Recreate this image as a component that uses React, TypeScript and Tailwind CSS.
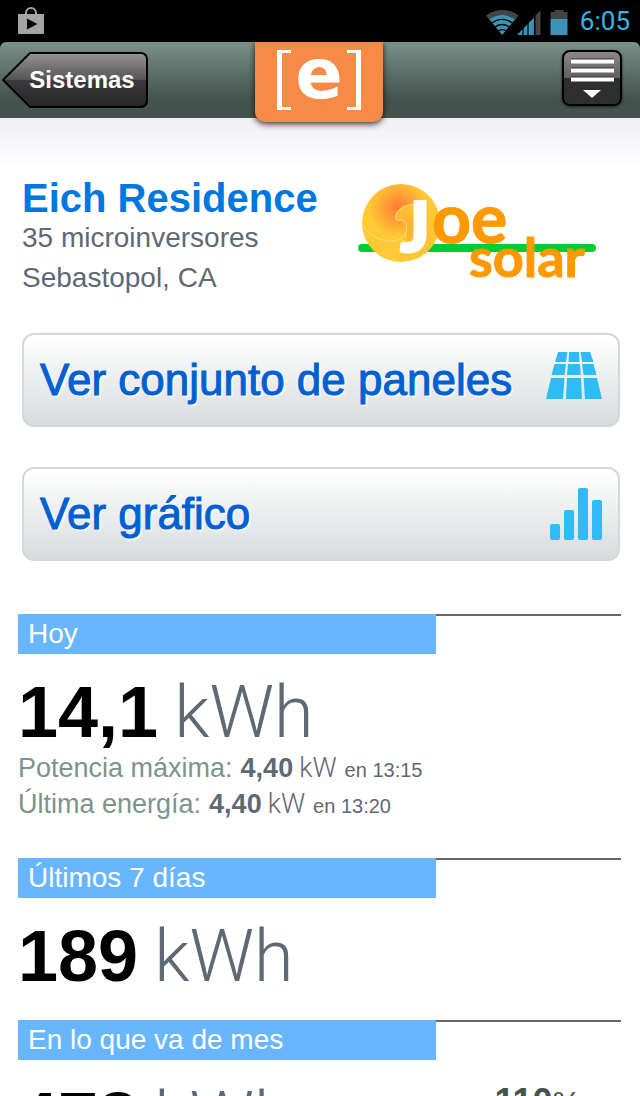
import React from 'react';

type Detail = { label: string; value: string; time: string };

type Period = {
    title: string;
    energy: string;
    percent?: string;
    details?: Detail[];
};

const periods: Period[] = [
    {
        title: 'Hoy',
        energy: '14,1',
        details: [
            { label: 'Potencia máxima:', value: '4,40', time: 'en 13:15' },
            { label: 'Última energía:', value: '4,40', time: 'en 13:20' },
        ],
    },
    { title: 'Últimos 7 días', energy: '189' },
    { title: 'En lo que va de mes', energy: '478', percent: '110' },
];

function StatusBar() {
    return (
        <div className="flex h-[42px] shrink-0 items-center justify-between bg-black pr-[10px] pl-[18px]">
            <svg width="26" height="28" viewBox="0 0 26 28">
                <path d="M8 7V6a5 5 0 0 1 10 0v1" fill="none" stroke="#a5a5a5" strokeWidth="2" />
                <path d="M0 7h26v19a1 1 0 0 1-1 1H1a1 1 0 0 1-1-1z" fill="#a5a5a5" />
                <path d="M9 11.500v11l10.500-5.500z" fill="#000" />
            </svg>
            <div className="flex items-center">
                <svg width="82" height="28" viewBox="0 0 82 28">
                    {/* wifi */}
                    <path d="M0 8.500C9 1 23 1 32.500 8.500L29 13C21 6.500 11 6.500 3.500 13z" fill="#444" />
                    <path d="M3.500 12.500C11 6.500 21 6.500 29 12.500L16.200 28z" fill="#3a94b8" />
                    <path d="M5.500 16.500C12 11 20.500 11 27 16.500M8.500 20.500C13 16.500 19.500 16.500 24 20.500M11.500 24.500C14 22 18.500 22 21 24.500" fill="none" stroke="#000" strokeWidth="1.300" />
                    {/* signal */}
                    <path d="M31 28L49 9.500V28z" fill="#3a94b8" />
                    <path d="M49.500 8.500L54.500 3V28h-5z" fill="#444" />
                    <path d="M37 20v8M42 14v14M48.500 8v20" stroke="#000" strokeWidth="1.200" />
                    {/* battery */}
                    <path d="M64.500 5h4V3h9v2h4v7h-17z" fill="#444" />
                    <path d="M64.500 12h17v16h-17z" fill="#3a94b8" />
                </svg>
                <span className="ml-3 font-['Roboto',sans-serif] text-[26px] leading-8 text-[#33b5e5]">6:05</span>
            </div>
        </div>
    );
}

function Header() {
    return (
        <div className="shrink-0 bg-black">
            <header className="relative z-10 flex h-[76px] items-start justify-between rounded-t-md bg-linear-to-b from-[#7a9189] to-[#45534f] to-75% pt-2 pr-[18px] pl-0.5">
                <button type="button" className="relative mt-0.5 h-14 w-[146px] pl-[14px] text-2xl font-bold text-white">
                    <svg className="absolute inset-0" width="146" height="56" viewBox="0 0 146 56">
                        <defs>
                            <linearGradient id="back" x1="0" y1="0" x2="0" y2="1">
                                <stop offset="0" stopColor="#959595" />
                                <stop offset="0.490" stopColor="#555" />
                                <stop offset="0.500" stopColor="#3b3b3b" />
                                <stop offset="1" stopColor="#262626" />
                            </linearGradient>
                        </defs>
                        <path d="M1 28L28 1h111a6 6 0 0 1 6 6v42a6 6 0 0 1-6 6H28z" fill="url(#back)" stroke="#000" strokeWidth="2" strokeLinejoin="round" />
                    </svg>
                    <span className="relative">Sistemas</span>
                </button>
                <div
                    role="img"
                    aria-label="Enphase"
                    className="absolute top-0 left-1/2 flex h-20 w-32 -translate-x-[65px] items-start justify-center gap-px rounded-b-[10px] bg-[#f68b48] pt-2 text-white shadow-[0_2px_6px_rgba(0,0,0,0.800)]"
                >
                    <span className="h-[60px] w-[14px] border-y-[3px] border-l-[5px] border-white" />
                    <span className="w-[54px] text-center font-['DejaVu_Sans',sans-serif] text-[70px] leading-[48px] font-bold">e</span>
                    <span className="h-[60px] w-[14px] border-y-[3px] border-r-[5px] border-white" />
                </div>
                <button
                    type="button"
                    aria-label="Menú"
                    className="flex h-14 w-[60px] items-center justify-center rounded-lg border-2 border-black bg-linear-to-b from-[#8c8787] via-[#606060] via-50% to-[#262626] shadow-[0_1px_3px_rgba(0,0,0,0.600)]"
                >
                    <svg width="56" height="52" viewBox="0 0 56 52">
                        <path d="M0 26h56v20a6 6 0 0 1-6 6H6a6 6 0 0 1-6-6z" fill="#2e2e2e" />
                        <path d="M7 7.500h43M7 16.500h43M7 25.500h43" stroke="#333" strokeWidth="2" />
                        <path d="M7 9.500h43M7 18.500h43M7 27.500h43" stroke="#fff" strokeWidth="4" />
                        <path d="M19 38h18l-9 8z" fill="#fff" />
                    </svg>
                </button>
            </header>
        </div>
    );
}

function InstallerLogo() {
    return (
        <svg className="overflow-visible" width="240" height="98" viewBox="18 12 240 98" role="img" aria-label="Joe solar">
            <defs>
                <radialGradient id="glow" cx="58" cy="38" r="29" gradientUnits="userSpaceOnUse">
                    <stop offset="0" stopColor="#ff7a35" />
                    <stop offset="0.500" stopColor="#ffa236" />
                    <stop offset="1" stopColor="#ffca35" />
                </radialGradient>
                <radialGradient id="glowLow" cx="66" cy="60" r="30" gradientUnits="userSpaceOnUse">
                    <stop offset="0" stopColor="#ffae36" />
                    <stop offset="1" stopColor="#ffc835" />
                </radialGradient>
            </defs>
            <path d="M22 78h230" stroke="#00cc33" strokeWidth="8" strokeLinecap="round" />
            <circle cx="61" cy="53" r="39" fill="url(#glow)" />
            <path d="M94 36A39 39 0 0 1 52 91C64 86 69 74 66 62C68 55 66 52 61 50C55 53 53 45 60 39C68 33 80 33 94 36z" fill="url(#glowLow)" />
            <path d="M22 54C30 68 48 75 60 69C69 64 69 53 61 50C55 53 53 45 60 39C66 34 76 33 84 36" fill="none" stroke="#ffdc8a" strokeWidth="1" />
            <g className="font-['Lato',sans-serif] font-bold">
                <text x="61" y="81" fontSize="66" fill="#fff" stroke="#fff" strokeWidth="4">J</text>
                <text x="92" y="73" fontSize="68" fill="#ff9900" stroke="#ff9900" strokeWidth="1">oe</text>
                <text x="129" y="107" fontSize="54" fill="#ff9900" stroke="#ff9900" strokeWidth="1">solar</text>
            </g>
        </svg>
    );
}

function PanelsIcon() {
    return (
        <svg width="56" height="56" viewBox="0 0 56 56" fill="#2ebbf7">
            <path d="M12 0h9.500l-1.500 10H9zM23 0h10l.5 10h-11zM34.500 0H44l3.500 10H36z" />
            <path d="M8.500 12H20l-1.500 11H5.500zM22 12h12l.8 11H21zM36 12h11.500l3 11h-13z" />
            <path d="M5 26h13.500L17 47H0zM21 26h14l1 21H20zM37.500 26H51l5 21H39z" />
        </svg>
    );
}

function ChartIcon() {
    return (
        <svg width="52" height="52" viewBox="0 0 52 52" fill="#2ebbf7">
            <rect x="0" y="36" width="10" height="16" rx="2" />
            <rect x="14" y="22" width="10" height="30" rx="2" />
            <rect x="28" y="0" width="10" height="52" rx="2" />
            <rect x="42" y="12" width="10" height="40" rx="2" />
        </svg>
    );
}

function ActionButton({ label, children }: { label: string; children: React.ReactNode }) {
    return (
        <button
            type="button"
            className="flex h-[94px] w-full items-center justify-between rounded-xl border-2 border-[#d6d8d8] bg-linear-to-b from-white to-[#d8dcdd] px-4 text-left text-[#005fd2]"
        >
            <span className="text-[44px] leading-[52px] whitespace-nowrap [-webkit-text-stroke:1px_#005fd2] [text-shadow:2px_2px_2px_#fff]">{label}</span>
            {children}
        </button>
    );
}

function PeriodSection({ period }: { period: Period }) {
    return (
        <section className="mb-[26px]">
            <div className="flex">
                <h2 className="h-10 w-[69.300%] bg-[#68b6ff] px-[10px] text-[28px] leading-10 text-white">{period.title}</h2>
                <div className="flex-1 border-t-2 border-[#666]" />
            </div>
            <div className="flex h-24 items-start justify-between pt-5 pr-10">
                <p className="flex items-baseline gap-4 leading-[76px]">
                    <span className="text-[72px] font-bold text-black">{period.energy}</span>
                    <span className="font-['Roboto',sans-serif] text-[72px] font-light">kWh</span>
                </p>
                {period.percent && (
                    <p className="pt-0.5 text-[36px] leading-10 font-bold text-[#46544f]">
                        {period.percent}
                        <span className="text-[32px] font-normal">%</span>
                    </p>
                )}
            </div>
            {period.details && (
                <div className="pb-[10px]">
                    {period.details.map(detail => (
                        <p key={detail.label} className="flex h-9 items-baseline text-[27px] leading-9 whitespace-nowrap">
                            <span className="mr-2 text-[#7c948b]">{detail.label}</span>
                            <b>{detail.value}</b>
                            <span className="mr-2 ml-1.5 font-['Roboto',sans-serif] font-light">kW</span>
                            <span className="text-xl">{detail.time}</span>
                        </p>
                    ))}
                </div>
            )}
        </section>
    );
}

export default function App() {
    return (
        <div className="flex h-screen flex-col overflow-hidden bg-white font-['Liberation_Sans',Arial,sans-serif] text-[#5f6875]">
            <StatusBar />
            <Header />
            <main className="min-h-0 flex-1 overflow-y-auto bg-linear-to-b from-[#f0f0f5] to-white to-[50px] [scrollbar-width:none]">
                <div className="pt-[60px] pr-5 pl-[22px]">
                    <div className="flex items-start justify-between pr-[22px]">
                        <div className="text-[28px] leading-10">
                            <h1 className="text-[40px] leading-10 font-bold text-[#0077e0]">Eich Residence</h1>
                            <p>35 microinversores</p>
                            <p>Sebastopol, CA</p>
                        </div>
                        <div className="pt-1">
                            <InstallerLogo />
                        </div>
                    </div>
                    <div className="mt-[35px] flex flex-col gap-10">
                        <ActionButton label="Ver conjunto de paneles">
                            <PanelsIcon />
                        </ActionButton>
                        <ActionButton label="Ver gráfico">
                            <ChartIcon />
                        </ActionButton>
                    </div>
                </div>
                <div className="mt-[53px] pr-[19px] pl-[18px]">
                    {periods.map(period => (
                        <PeriodSection key={period.title} period={period} />
                    ))}
                </div>
            </main>
        </div>
    );
}
